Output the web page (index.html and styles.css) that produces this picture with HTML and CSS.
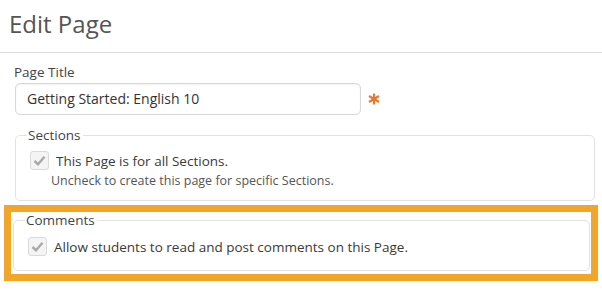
FILE: index.html
```html
<!DOCTYPE html>
<html>
<head>
<meta charset="utf-8">
<link rel="stylesheet" href="styles.css">
</head>
<body>
<h1 class="page-title">Edit Page</h1>
<form class="form">
  <div class="field">
    <label class="field-label">Page Title</label>
    <div class="input-row">
      <div class="text-input">Getting Started: English 10</div>
      <svg class="required" width="12" height="12" viewBox="0 0 12 12"><g stroke="#e8782e" stroke-width="2.2" stroke-linecap="butt"><line x1="6" y1="0.5" x2="6" y2="11.5"/><line x1="1" y1="3" x2="11" y2="9"/><line x1="1" y1="9" x2="11" y2="3"/></g></svg>
    </div>
  </div>
  <fieldset class="group group-sections">
    <legend class="group-legend">Sections</legend>
    <div class="check-row">
      <span class="checkbox"><svg width="13" height="11" viewBox="0 0 13 11"><path d="M1.5 6 L5 9.2 L11.5 1.8" fill="none" stroke="#a9a9a9" stroke-width="2.4"/></svg></span>
      <span class="check-text">This Page is for all Sections.</span>
    </div>
    <div class="hint">Uncheck to create this page for specific Sections.</div>
  </fieldset>
  <div class="highlight">
    <fieldset class="group group-comments">
      <legend class="group-legend">Comments</legend>
      <div class="check-row">
        <span class="checkbox"><svg width="13" height="11" viewBox="0 0 13 11"><path d="M1.5 6 L5 9.2 L11.5 1.8" fill="none" stroke="#a9a9a9" stroke-width="2.4"/></svg></span>
        <span class="check-text">Allow students to read and post comments on this Page.</span>
      </div>
    </fieldset>
  </div>
</form>
</body>
</html>
```
FILE: styles.css
```css
html, body {
  margin: 0;
  padding: 0;
  background: #fff;
}
body {
  font-family: "Open Sans", "Noto Sans", sans-serif;
  color: #3a3a3a;
  width: 602px;
  height: 295px;
  overflow: hidden;
}
.page-title {
  margin: 0;
  padding: 6px 0 0 9px;
  height: 46px;
  font-size: 24px;
  font-weight: 400;
  color: #555;
  border-bottom: 1px solid #dcdcdc;
  line-height: 36px;
}
.field {
  padding: 9px 0 0 14px;
}
.field-label {
  display: block;
  font-size: 13.5px;
  line-height: 20px;
  color: #444;
}
.input-row {
  display: flex;
  align-items: center;
  margin-top: 1px;
}
.text-input {
  box-sizing: border-box;
  width: 346px;
  height: 32px;
  margin-left: 1px;
  border: 1px solid #d8d8d8;
  border-radius: 5px;
  padding: 0 11px;
  font-size: 14px;
  line-height: 30px;
  color: #333;
  box-shadow: inset 0 1px 2px rgba(0,0,0,0.06);
}
.required {
  margin-left: 7px;
}
.group {
  margin: 0;
  border: 1px solid #e2e2e2;
  border-radius: 5px;
  padding: 0 0 0 14px;
  min-width: 0;
}
.group-legend {
  font-size: 13.5px;
  line-height: 16px;
  padding: 0 2px 0 1px;
  margin-left: -3px;
  color: #444;
}
.group-sections {
  margin: 12px 7px 0 15px;
  padding-bottom: 10px;
}
.check-row {
  display: flex;
  align-items: center;
  margin-top: 8px;
}
.checkbox {
  box-sizing: border-box;
  width: 19px;
  height: 19px;
  border: 1px solid #dadada;
  border-radius: 3px;
  background: #f4f4f4;
  display: flex;
  align-items: center;
  justify-content: center;
  flex: none;
}
.check-text {
  margin-left: 7px;
  font-size: 13.5px;
  color: #3a3a3a;
}
.hint {
  font-size: 12.5px;
  color: #555;
  margin: 2px 0 0 21px;
  line-height: 18px;
}
.highlight {
  margin: 4px 4px 0 4px;
  border: 7px solid #f2a629;
  padding: 0 1px 3px 2px;
}
.group-comments {
  padding-left: 14px;
  padding-bottom: 14px;
}
.group-comments .check-row {
  margin-top: 9px;
}
```
